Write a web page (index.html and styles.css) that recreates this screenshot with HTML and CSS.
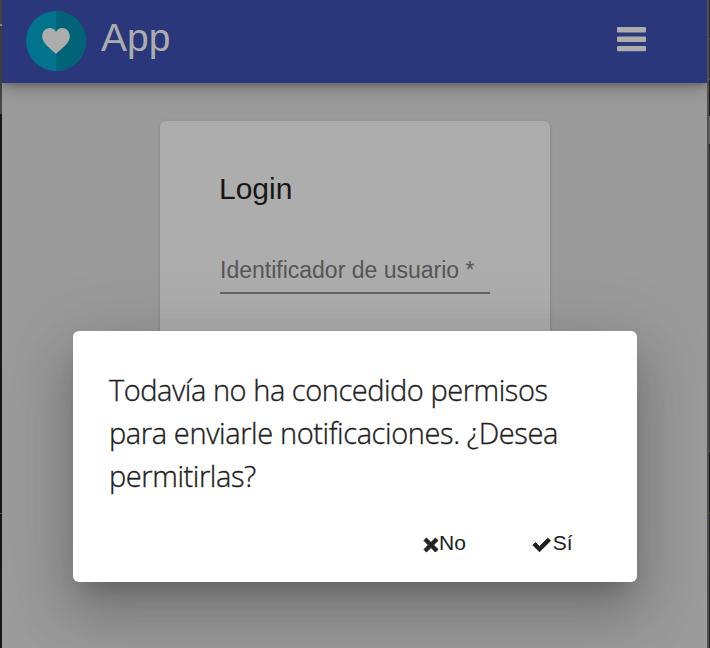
FILE: index.html
```
<!DOCTYPE html>
<html lang="es">
<head>
<meta charset="utf-8">
<title>App</title>
<link rel="stylesheet" href="styles.css">
</head>
<body>
<div class="app">
  <header class="toolbar">
    <svg class="logo" viewBox="0 0 60 60">
      <circle cx="30" cy="30" r="30" fill="#00738d"/>
      <path d="M30 0a30 30 0 0 1 0 60z" fill="#006378"/>
      <path d="M30 43C25 38 16.200 32.500 16.200 25.500C16.200 20.500 19.500 17 23.500 17C26.500 17 29 18.500 30 21C31 18.500 33.500 17 36.500 17C40.500 17 43.800 20.500 43.800 25.500C43.800 32.500 35 38 30 43z" fill="#adadad"/>
    </svg>
    <span class="brand">App</span>
    <svg class="menu" viewBox="0 0 29 25">
      <rect width="29" height="5.400" rx="1"/>
      <rect y="9.500" width="29" height="5.400" rx="1"/>
      <rect y="19" width="29" height="5.200" rx="1"/>
    </svg>
  </header>
  <main class="card">
    <h1 class="card-title">Login</h1>
    <div class="field">Identificador de usuario *</div>
  </main>
</div>
<div class="edge edge-left"></div>
<div class="edge edge-right"></div>
<div class="dialog" role="dialog">
  <p class="message"><span class="line line-a">Todavía no ha concedido permisos</span> <span class="line line-b">para enviarle notificaciones. ¿Desea</span> <span class="line line-c">permitirlas?</span></p>
  <div class="actions">
    <button class="action"><svg class="cross" viewBox="0 0 16 16"><path d="M3.400 1L8 5.500L12.400 1L15 3.600L10.500 8L15 12.400L12.400 15L8 10.500L3.400 15L1 12.400L5.400 8L1 3.600z"/></svg>No</button>
    <button class="action"><svg class="check" viewBox="0 0 20 16"><path d="M3.500 5.500L7.500 9.500L15.800 1.200L18.500 3.800L7.500 14.700L1 8.200z"/></svg>Sí</button>
  </div>
</div>
</body>
</html>
```
FILE: styles.css
```
* { box-sizing: border-box; }
body {
  margin: 0;
  height: 648px;
  overflow: hidden;
  background: #9b9b9b;
  font-family: "Liberation Sans", Arial, sans-serif;
}
.app { height: 648px; margin: 0 3px 0 2px; }
.toolbar {
  display: flex;
  align-items: flex-start;
  height: 83px;
  padding: 11px 61px 0 24px;
  background: #2b377b;
  color: #adadad;
  box-shadow: 0 3px 6px -1px rgba(0,0,0,.2), 0 6px 15px rgba(0,0,0,.14), 0 2px 20px rgba(0,0,0,.12);
}
.logo { width: 60px; height: 60px; }
.brand { margin-left: 15px; font-size: 39px; line-height: 54px; }
.menu { width: 29px; height: 25px; margin: 16px 0 0 auto; fill: #adadad; }
.card {
  width: 390px;
  height: 420px;
  margin: 38px 0 0 158px;
  padding: 50px 60px;
  border-radius: 6px;
  background: #adadad;
  box-shadow: 0 3px 2px -2px rgba(0,0,0,.14), 0 1px 2px rgba(0,0,0,.1), 0 1px 5px rgba(0,0,0,.1);
}
.card-title { margin: 0 0 0 -1px; font-size: 30px; font-weight: 400; line-height: 36px; color: #171717; }
.field {
  height: 43px;
  margin-top: 44px;
  border-bottom: 2px solid #656565;
  font-size: 23px;
  line-height: 38px;
  color: #565656;
  white-space: nowrap;
}
.edge { position: absolute; top: 0; height: 648px; }
.edge-left { left: 0; width: 2px; background: linear-gradient(#444 0 24px, #858585 24px 26px, #3e3e3e 26px 80px, #4b4b4b 114px, #181818 114px 513px, #444 513px 514px, #181818 514px); }
.edge-right { right: 0; width: 3px; background: linear-gradient(#505050, #505050) 0 0 / 2px 100% no-repeat, linear-gradient(#292929 0 38px, #484848 38px 40px, #303030 40px 78px, #555 78px 80px, #1c1c1c 80px 116px, #666 116px 144px, #1c1c1c 144px 146px, #303030 146px 450px, #555 450px 452px, #181818 452px 512px, #454500 512px 514px, #202020 514px); }
.dialog {
  position: absolute;
  left: 73px;
  top: 331px;
  width: 564px;
  height: 251px;
  padding: 37px 36px 0;
  border-radius: 6px;
  background: #fff;
  box-shadow: 0 16px 22px -10px rgba(0,0,0,.2), 0 36px 57px 4px rgba(0,0,0,.14), 0 13px 69px 12px rgba(0,0,0,.12);
}
.message {
  margin: 0;
  font-family: "Open Sans", "Noto Sans", sans-serif;
  font-size: 29px;
  font-weight: 300;
  line-height: 43px;
  color: #212121;
  -webkit-text-stroke: .35px #212121;
}
.line { display: block; width: max-content; }
.line-a { letter-spacing: -.46px; }
.line-b { letter-spacing: -.39px; }
.line-c { letter-spacing: -.42px; }
.actions { display: flex; gap: 66px; margin: 31px 0 0 313px; }
.action {
  display: flex;
  align-items: center;
  padding: 0;
  border: 0;
  background: none;
  font: 21px/30px "Liberation Sans", Arial, sans-serif;
  color: #212121;
}
.action svg { fill: #212121; stroke: #212121; stroke-width: 1; stroke-linejoin: round; margin-top: 4px; }
.cross { width: 16px; height: 16px; margin-left: 1px; }
.check { width: 20px; height: 16px; margin-right: 1px; }
```
